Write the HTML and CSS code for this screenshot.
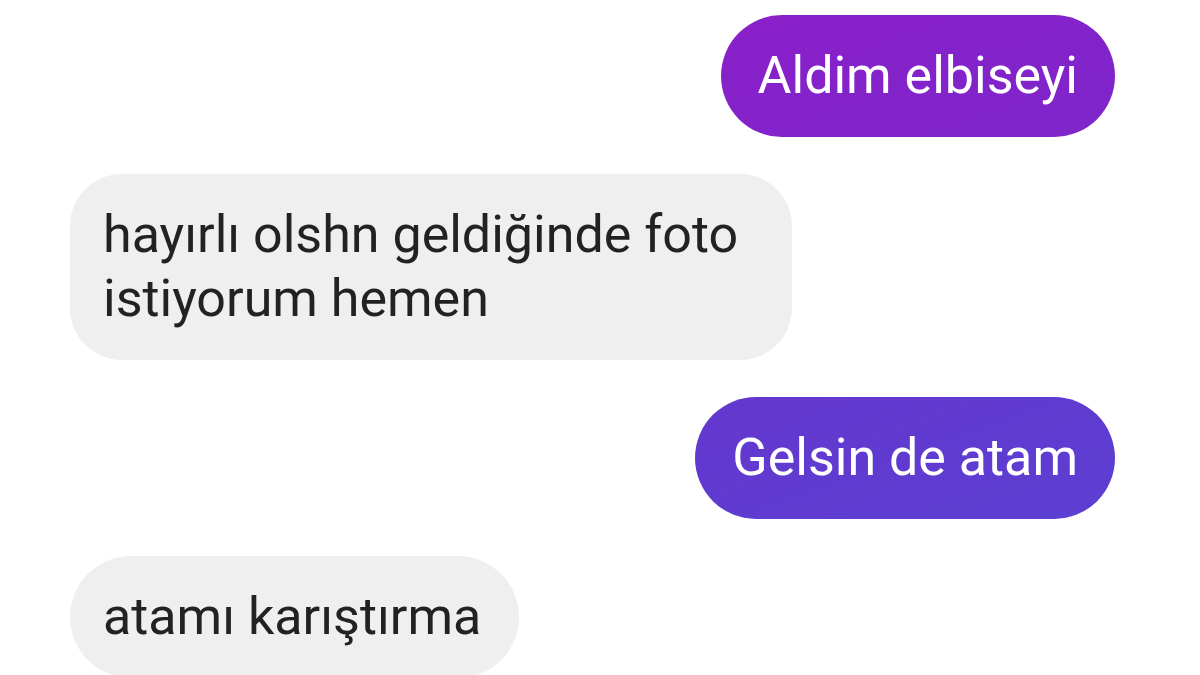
FILE: index.html
```html
<!DOCTYPE html>
<html lang="tr">
<head>
    <meta charset="UTF-8">
    <meta name="viewport" content="width=device-width, initial-scale=1.0">
    <title>Sohbet</title>
    <link rel="stylesheet" href="styles.css">
</head>
<body>
    <div class="chat">
        <div class="msg sent sent-top">Aldim elbiseyi</div>
        <div class="msg received wide">hayırlı olshn geldiğinde foto istiyorum hemen</div>
        <div class="msg sent sent-bottom">Gelsin de atam</div>
        <div class="msg received">atamı karıştırma</div>
    </div>
</body>
</html>
```

FILE: styles.css
```css
body {
    margin: 0;
    background-color: #ffffff;
    font-family: Roboto, "Liberation Sans", sans-serif;
    overflow: hidden;
}
.chat {
    display: flex;
    flex-direction: column;
    gap: 37px;
    padding: 15px 85px 0 70px;
    height: 675px;
    box-sizing: border-box;
}
.msg {
    font-size: 52px;
    line-height: 64px;
    padding: 29px 37px 29px 37px;
    border-radius: 61px;
    max-width: 722px;
    box-sizing: border-box;
    white-space: normal;
}
.sent {
    align-self: flex-end;
    color: #ffffff;
}
.sent-top {
    background: linear-gradient(160deg, #8a1fc9 0%, #7d26cb 100%);
}
.sent-bottom {
    background: linear-gradient(160deg, #6437cf 0%, #5c3fd2 100%);
}
.received {
    align-self: flex-start;
    background-color: #efefef;
    color: #222222;
    padding-left: 33px;
    padding-right: 38px;
}
.wide {
    border-radius: 52px;
}
```
